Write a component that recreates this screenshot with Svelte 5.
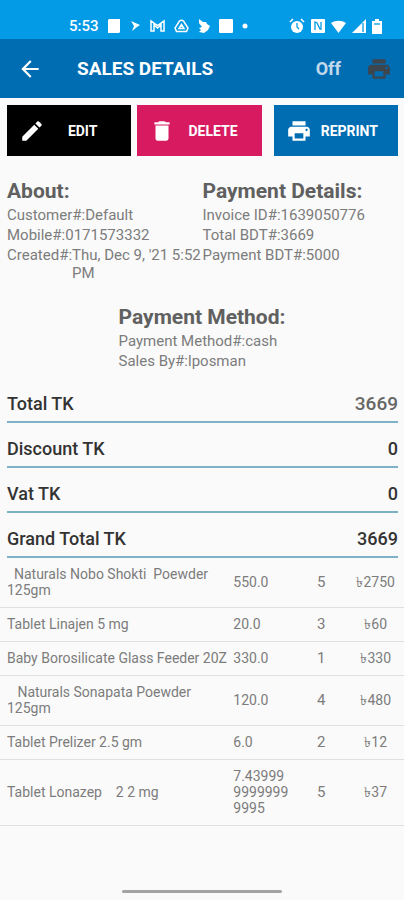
<script>
  const invoice = {
    about: [
      { label: 'Customer#:', value: 'Default' },
      { label: 'Mobile#:', value: '0171573332' },
      { label: 'Created#:', value: "Thu, Dec 9, '21 5:52 PM" },
    ],
    payment: [
      { label: 'Invoice ID#:', value: '1639050776' },
      { label: 'Total BDT#:', value: '3669' },
      { label: 'Payment BDT#:', value: '5000' },
    ],
    method: [
      { label: 'Payment Method#:', value: 'cash' },
      { label: 'Sales By#:', value: 'lposman' },
    ],
  };

  const totals = [
    { label: 'Total TK', value: '3669', muted: true },
    { label: 'Discount TK', value: '0' },
    { label: 'Vat TK', value: '0' },
    { label: 'Grand Total TK', value: '3669' },
  ];

  const items = [
    { name: '  Naturals Nobo Shokti  Poewder 125gm', price: '550.0', qty: 5, total: 2750 },
    { name: 'Tablet Linajen 5 mg', price: '20.0', qty: 3, total: 60 },
    { name: 'Baby Borosilicate Glass Feeder 20Z', price: '330.0', qty: 1, total: 330 },
    { name: '   Naturals Sonapata Poewder 125gm', price: '120.0', qty: 4, total: 480 },
    { name: 'Tablet Prelizer 2.5 gm', price: '6.0', qty: 2, total: 12 },
    { name: 'Tablet Lonazep    2 2 mg', price: '7.4399999999999995', qty: 5, total: 37 },
  ];
</script>

{#snippet printer()}
  <svg class="icon" viewBox="0 0 24 24" aria-hidden="true">
    <path d="M19 8H5c-1.66 0-3 1.34-3 3v6h4v4h12v-4h4v-6c0-1.66-1.34-3-3-3zm-3 11H8v-5h8v5zm3-7c-.55 0-1-.45-1-1s.45-1 1-1 1 .45 1 1-.45 1-1 1zm-1-9H6v4h12V3z" />
  </svg>
{/snippet}

{#snippet group(title, rows)}
  <h2>{title}</h2>
  <dl>
    {#each rows as row}
      <div class="detail">
        <dt>{row.label}</dt>
        <dd>{row.value}</dd>
      </div>
    {/each}
  </dl>
{/snippet}

<div class="screen">
  <div class="status-bar">
    <span class="clock">5:53</span>
    <svg width="12" height="16" viewBox="0 0 12 16"><path d="M1 1h11v13l-1 1H0V2z" /></svg>
    <svg width="12" height="12" viewBox="0 0 12 12"><path d="M2 1l9 4-3 2-5 4 2-5z" /></svg>
    <svg width="15" height="14" viewBox="0 0 15 14">
      <path class="line" d="M1 12V2l6.500 4.500L14 2v10h-3V6L7.500 9 4 6v6z" />
    </svg>
    <svg width="15" height="14" viewBox="0 0 15 14">
      <path class="line" d="M5.500 2q2-1.500 4 0l4.500 7-1.500 3.500h-10L1 9zM7.500 5.500l2.500 4H5z" />
    </svg>
    <svg width="12" height="14" viewBox="0 0 12 14">
      <path d="M1 0l4 3 3 0 1 2 3 2-2 4-4 3-5-1 2-2-2-2 3-1-3-4z" />
    </svg>
    <svg width="14" height="14" viewBox="0 0 14 14"><rect width="14" height="14" rx="1" /></svg>
    <svg width="6" height="6" viewBox="0 0 6 6"><circle cx="3" cy="3" r="2.5" /></svg>
    <div class="system">
      <svg width="16" height="16" viewBox="0 0 16 16">
        <circle cx="8" cy="9" r="6" />
        <path class="line" d="M1 4l3-3M15 4l-3-3" />
        <path class="cut" d="M8 5v4l2 2" />
      </svg>
      <svg width="14" height="14" viewBox="0 0 14 14">
        <rect width="14" height="14" rx="1" />
        <path class="cut" d="M4 11V3l2 1 3 6 1 0V3" />
      </svg>
      <svg width="15" height="13" viewBox="0 0 15 13"><path d="M0 3c5-3 10-3 15 0L7.500 13z" /></svg>
      <svg width="14" height="14" viewBox="0 0 14 14">
        <path d="M14 0v14H0z" />
        <path class="cut" d="M11 4v9" />
      </svg>
      <svg width="10" height="15" viewBox="0 0 10 15">
        <path d="M3 0h4v2h3v13H0V2h3z" />
        <path class="cut" d="M2 5h6" />
      </svg>
    </div>
  </div>

  <header>
    <button class="back" aria-label="Back">
      <svg class="icon" viewBox="0 0 24 24" aria-hidden="true">
        <path d="M20 11H7.83l5.59-5.59L12 4l-8 8 8 8 1.41-1.41L7.83 13H20v-2z" />
      </svg>
    </button>
    <h1>SALES DETAILS</h1>
    <button class="toggle">Off</button>
    <button class="print" aria-label="Print">{@render printer()}</button>
  </header>

  <main>
    <div class="actions">
      <button class="edit">
        <svg class="icon" viewBox="0 0 24 24" aria-hidden="true">
          <path d="M3 17.25V21h3.75L17.81 9.94l-3.75-3.75L3 17.25zM20.71 7.04c.39-.39.39-1.02 0-1.41l-2.34-2.34c-.39-.39-1.02-.39-1.41 0l-1.83 1.83 3.75 3.75 1.83-1.83z" />
        </svg>
        <span>EDIT</span>
      </button>
      <button class="delete">
        <svg class="icon" viewBox="0 0 24 24" aria-hidden="true">
          <path d="M6 19c0 1.1.9 2 2 2h8c1.1 0 2-.9 2-2V7H6v12zM19 4h-3.5l-1-1h-5l-1 1H5v2h14V4z" />
        </svg>
        <span>DELETE</span>
      </button>
      <button class="reprint">
        {@render printer()}
        <span>REPRINT</span>
      </button>
    </div>

    <div class="info">
      <section>{@render group('About:', invoice.about)}</section>
      <section>{@render group('Payment Details:', invoice.payment)}</section>
    </div>
    <section class="method">{@render group('Payment Method:', invoice.method)}</section>

    <dl class="totals">
      {#each totals as row}
        <div class="total">
          <dt>{row.label}</dt>
          <dd class:muted={row.muted}>{row.value}</dd>
        </div>
      {/each}
    </dl>

    <table>
      <tbody>
        {#each items as item}
          <tr>
            <td class="name">{item.name}</td>
            <td class="price">{item.price}</td>
            <td class="qty">{item.qty}</td>
            <td class="sum">৳{item.total}</td>
          </tr>
        {/each}
      </tbody>
    </table>
  </main>

  <div class="home-bar"></div>
</div>

<style>
  :global(body) {
    margin: 0;
    background: #fafafa;
  }

  .screen {
    display: flex;
    flex-direction: column;
    min-height: 100vh;
    background: #fafafa;
    color: #7c7c7c;
    font-family: Roboto, 'Liberation Sans', sans-serif;
  }

  h1, h2, dl, dd {
    margin: 0;
  }

  button {
    padding: 0;
    border: 0;
    background: none;
    font-family: inherit;
    cursor: pointer;
  }

  svg {
    display: block;
    flex: none;
    fill: currentColor;
  }

  .icon {
    width: 26px;
    height: 26px;
  }

  .line {
    fill: none;
    stroke: currentColor;
    stroke-width: 1.5;
  }

  .cut {
    fill: none;
    stroke: #039be5;
    stroke-width: 1.3;
  }

  .status-bar {
    display: flex;
    align-items: center;
    gap: 9px;
    height: 26px;
    padding: 13px 22px 0 69px;
    background: #039be5;
    color: #fff;
  }

  .clock {
    font-size: 15px;
    font-weight: 500;
  }

  .system {
    display: flex;
    align-items: center;
    gap: 6px;
    margin-left: auto;
  }

  header {
    display: flex;
    align-items: center;
    height: 59px;
    padding: 0 12px 0 17px;
    background: #006db3;
    color: #fff;
  }

  h1 {
    flex: 1;
    margin-left: 34px;
    font-size: 19px;
    font-weight: 700;
  }

  .back {
    color: #fff;
  }

  .toggle {
    color: #c2d9ec;
    font-size: 18px;
    font-weight: 700;
  }

  .print {
    margin-left: 25px;
    color: #3d454d;
  }

  .actions {
    display: flex;
    gap: 6px;
    padding: 7px 6px 0 7px;
  }

  .actions button {
    display: flex;
    flex: 1;
    align-items: center;
    height: 51px;
    padding: 0 11px 0 12px;
    color: #fff;
    font-size: 14px;
    font-weight: 700;
  }

  .actions span {
    flex: 1;
    text-align: center;
  }

  .edit {
    background: #000;
  }

  .delete {
    background: #d81b60;
  }

  .actions .reprint {
    margin-left: 6px;
    background: #006db3;
  }

  .info {
    display: grid;
    grid-template-columns: 1fr 1fr;
    padding: 23px 6px 0 7px;
  }

  h2 {
    margin-bottom: 3px;
    color: #606060;
    font-size: 21px;
    font-weight: 700;
    line-height: 24px;
  }

  .detail {
    display: flex;
    margin-bottom: 2px;
    font-size: 15px;
    line-height: 18px;
  }

  .method {
    width: max-content;
    margin: 21px auto 0;
  }

  .totals {
    padding: 6px 6px 0 7px;
  }

  .total {
    display: flex;
    justify-content: space-between;
    padding: 14px 0 5px;
    border-bottom: 2px solid #7fb2c6;
    color: #333;
    font-size: 18px;
    font-weight: 500;
    line-height: 24px;
  }

  .muted {
    color: #666;
    font-size: 19px;
  }

  table {
    width: 100%;
    border-collapse: collapse;
    table-layout: fixed;
    font-size: 14px;
    line-height: 16px;
  }

  td {
    box-sizing: border-box;
    padding: 8px 0 9px;
    border-bottom: 1px solid #e0e0e0;
    text-align: center;
  }

  .name {
    width: 57%;
    padding-left: 7px;
    text-align: left;
    white-space: pre-wrap;
  }

  .price {
    width: 16%;
    padding-left: 3px;
    padding-right: 5px;
    text-align: left;
    word-break: break-all;
  }

  .qty {
    width: 13%;
    font-size: 15px;
  }

  .sum {
    width: 14%;
  }

  .home-bar {
    width: 160px;
    height: 3px;
    margin: auto auto 7px;
    border-radius: 2px;
    background: #a3a3a3;
  }
</style>
